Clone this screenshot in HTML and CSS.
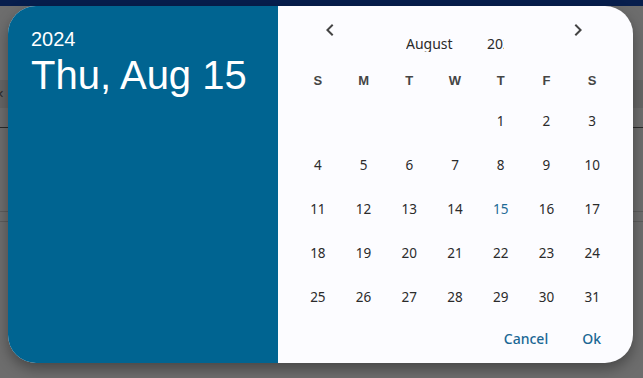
FILE: index.html
```html
<!DOCTYPE html>
<html lang="en">
<head>
<meta charset="utf-8">
<title>Date picker</title>
<link rel="stylesheet" href="styles.css">
</head>
<body>
<div class="page">
  <div class="appbar"></div>
  <div class="toolbar"><span class="close">&#x2715;</span></div>
  <div class="rule dark"></div>
  <div class="spacer"></div>
  <div class="rule"></div>
  <div class="spacer small"></div>
  <div class="rule"></div>
</div>

<div class="dialog">
  <div class="hero">
    <div class="year">2024</div>
    <div class="date">Thu, Aug 15</div>
  </div>
  <div class="cal">
    <div class="nav">
      <span class="chev"><svg viewBox="0 0 24 24" width="24" height="24"><path d="M15.41 7.41L14 6l-6 6 6 6 1.41-1.41L10.83 12z" fill="#444"/></svg></span>
      <span class="chev"><svg viewBox="0 0 24 24" width="24" height="24"><path d="M8.59 16.59L10 18l6-6-6-6-1.41 1.41L13.17 12z" fill="#444"/></svg></span>
    </div>
    <div class="pickers">
      <div class="pick month">August</div>
      <div class="pick yr">2024</div>
    </div>
    <div class="grid">
      <div class="wd">S</div><div class="wd">M</div><div class="wd">T</div><div class="wd">W</div><div class="wd">T</div><div class="wd">F</div><div class="wd">S</div>
      <div class="d"></div><div class="d"></div><div class="d"></div><div class="d"></div><div class="d">1</div><div class="d">2</div><div class="d">3</div>
      <div class="d">4</div><div class="d">5</div><div class="d">6</div><div class="d">7</div><div class="d">8</div><div class="d">9</div><div class="d">10</div>
      <div class="d">11</div><div class="d">12</div><div class="d">13</div><div class="d">14</div><div class="d sel">15</div><div class="d">16</div><div class="d">17</div>
      <div class="d">18</div><div class="d">19</div><div class="d">20</div><div class="d">21</div><div class="d">22</div><div class="d">23</div><div class="d">24</div>
      <div class="d">25</div><div class="d">26</div><div class="d">27</div><div class="d">28</div><div class="d">29</div><div class="d">30</div><div class="d">31</div>
    </div>
    <div class="actions">
      <span class="btn">Cancel</span>
      <span class="btn">Ok</span>
    </div>
  </div>
</div>
</body>
</html>
```

FILE: styles.css
```css
html, body {
  margin: 0;
  padding: 0;
}
body {
  width: 643px;
  height: 378px;
  overflow: hidden;
  background: #6d6d6d;
  font-family: "Noto Sans", "Open Sans", sans-serif;
  position: relative;
}
.page {
  display: flex;
  flex-direction: column;
}
.appbar {
  height: 6px;
  background: #071e4d;
}
.toolbar {
  margin-top: 74px;
  height: 28px;
  background: #656565;
  display: flex;
  align-items: center;
}
.close {
  margin-left: -5px;
  color: #2c2c2c;
  font-size: 11px;
  font-family: "DejaVu Sans", sans-serif;
}
.rule {
  height: 1px;
  background: #5c5c5c;
}
.rule.dark {
  margin-top: 19px;
  background: #2a2a2a;
}
.spacer { height: 83px; }
.spacer.small { height: 9px; }

.dialog {
  position: absolute;
  left: 8px;
  top: 6px;
  width: 625px;
  height: 357px;
  border-radius: 28px;
  overflow: hidden;
  display: flex;
  background: #fcfcff;
  box-shadow: 0 6px 14px rgba(0, 0, 0, 0.35);
}
.hero {
  width: 270px;
  flex: none;
  background: #006491;
  color: #ffffff;
  font-family: "Liberation Sans", Arial, sans-serif;
  padding: 22px 0 0 23px;
  box-sizing: border-box;
}
.year {
  font-size: 20px;
  line-height: 23px;
}
.date {
  margin-top: 1px;
  font-size: 40px;
  line-height: 46px;
}
.cal {
  flex: 1;
  display: flex;
  flex-direction: column;
  padding: 12px 18px 0 17px;
}
.nav {
  height: 24px;
  display: flex;
  justify-content: space-between;
  padding: 0 25px 0 23px;
}
.chev {
  width: 24px;
  height: 24px;
  display: block;
}
.chev svg { display: block; }
.pickers {
  margin-top: -6px;
  height: 16px;
  display: flex;
  gap: 33px;
  padding-left: 111px;
  font-size: 14px;
  line-height: 16px;
  color: #2a2a2a;
}
.pick {
  overflow: hidden;
  white-space: nowrap;
}
.month { width: 48px; }
.yr { width: 17px; }
.grid {
  margin-top: 9px;
  display: grid;
  grid-template-columns: repeat(7, 1fr);
  grid-template-rows: 38px repeat(5, 44px);
}
.wd {
  display: flex;
  align-items: center;
  justify-content: center;
  font-family: "Liberation Sans", Arial, sans-serif;
  font-weight: bold;
  font-size: 13px;
  color: #454545;
}
.d {
  display: flex;
  align-items: center;
  justify-content: center;
  font-size: 13.5px;
  color: #2b2b2b;
}
.d.sel { color: #1d6a96; }
.actions {
  margin-top: 1px;
  height: 36px;
  display: flex;
  justify-content: flex-end;
  align-items: center;
  gap: 34px;
  padding-right: 14px;
}
.btn {
  font-size: 14px;
  font-weight: 500;
  color: #1a6794;
}
```
